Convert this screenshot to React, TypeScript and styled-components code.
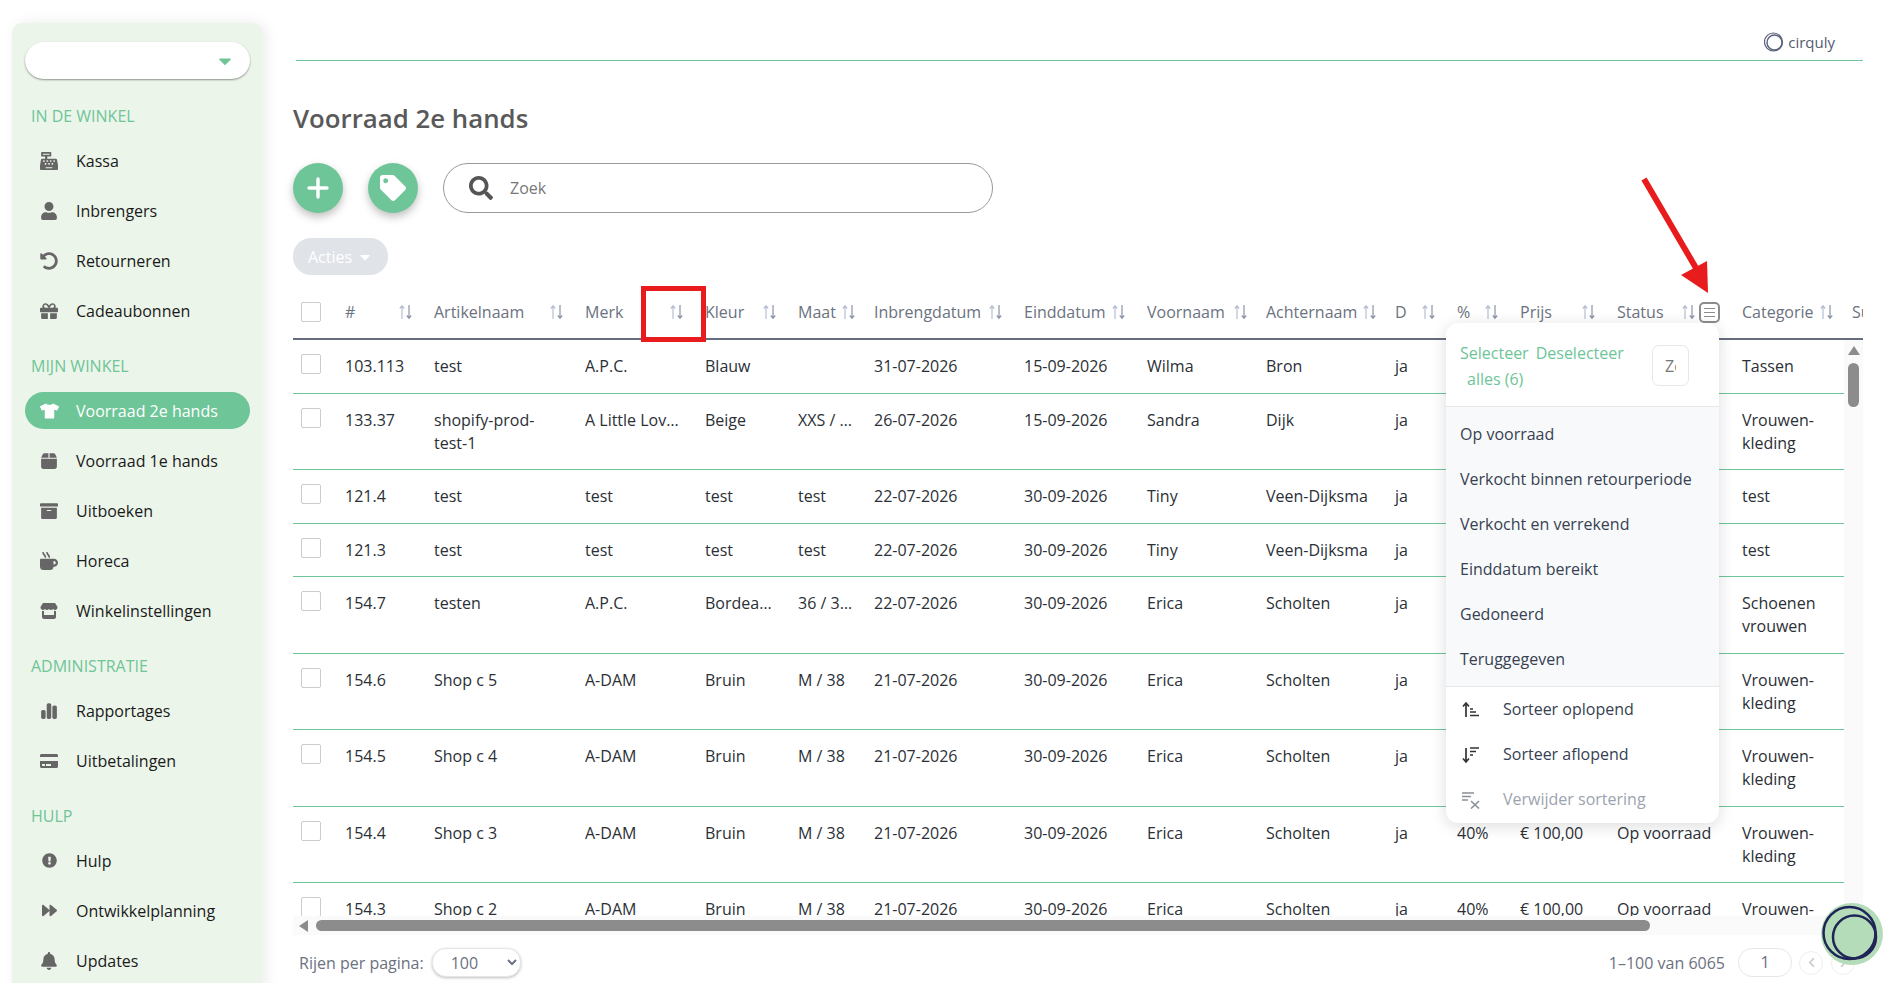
import React from 'react';
import styled, { createGlobalStyle } from 'styled-components';
import {
  FaArchive,
  FaBell,
  FaCaretDown,
  FaCashRegister,
  FaChevronLeft,
  FaChevronRight,
  FaCreditCard,
  FaExclamationCircle,
  FaForward,
  FaGift,
  FaMugHot,
  FaSearch,
  FaTag,
  FaTshirt,
  FaUndoAlt,
  FaUser,
} from 'react-icons/fa';
import { FaBox, FaChartSimple, FaStore } from 'react-icons/fa6';

const green = '#6ec597';
const columns = '52px 89px 151px 120px 93px 76px 150px 123px 119px 129px 62px 63px 97px 125px 110px 80px';

const GlobalStyle = createGlobalStyle`
  html, body {
    margin: 0;
    height: 100%;
    overflow: hidden;
    background: #fff;
    font-family: "Open Sans", "Liberation Sans", sans-serif;
    font-size: 16px;
  }
  * { box-sizing: border-box; }
`;

const Page = styled.div`
  display: flex;
  height: 100vh;
  overflow: hidden;
`;

const Sidebar = styled.aside`
  flex: 0 0 250px;
  height: 1000px;
  margin: 23px 0 0 12px;
  padding: 19px 12px 0 13px;
  background: #ecf5ea;
  border-radius: 10px;
  box-shadow: 4px 0 14px rgba(0, 0, 0, 0.08);
`;

const ShopSelect = styled.div`
  display: flex;
  align-items: center;
  justify-content: flex-end;
  height: 37px;
  margin-bottom: 26px;
  padding-right: 15px;
  background: #fff;
  border-radius: 19px;
  box-shadow: 0 1px 2px rgba(0, 0, 0, 0.4);
  color: ${green};
  font-size: 20px;
`;

const Section = styled.div`
  margin-bottom: 26px;
`;

const SectionTitle = styled.div`
  height: 22px;
  margin-bottom: 15px;
  padding-left: 6px;
  line-height: 22px;
  color: ${green};
  text-transform: uppercase;
`;

const NavItem = styled.div<{ $active?: boolean }>`
  display: flex;
  align-items: center;
  height: 37px;
  margin-bottom: 13px;
  padding-left: 15px;
  border-radius: 19px;
  background: ${(p) => (p.$active ? green : 'transparent')};
  color: ${(p) => (p.$active ? '#fff' : '#1a1a1a')};
`;

const NavIcon = styled.span<{ $active?: boolean }>`
  display: flex;
  align-items: center;
  flex: 0 0 36px;
  color: ${(p) => (p.$active ? '#fff' : '#666')};
  svg {
    width: auto;
    height: 18px;
  }
`;

const ShirtIcon = styled(FaTshirt)`
  && { width: 19px; height: 16px; }
`;

const SmallIcon = styled.span`
  display: flex;
  margin-left: 2px;
  svg { height: 15px; }
`;

const Main = styled.main`
  flex: 1;
  min-width: 0;
  padding: 0 22px 0 31px;
`;

const TopBar = styled.header`
  display: flex;
  align-items: flex-start;
  justify-content: flex-end;
  height: 61px;
  margin-left: 3px;
  padding: 31px 28px 0 0;
  border-bottom: 1px solid ${green};
`;

const Brand = styled.div`
  display: flex;
  align-items: center;
  gap: 4px;
  height: 22px;
  color: #555b6e;
  font-size: 15px;
`;

const Title = styled.h1`
  margin: 41px 0 28px;
  color: #595959;
  font-size: 25.8px;
  line-height: 33px;
  font-weight: 600;
`;

const Toolbar = styled.div`
  display: flex;
  gap: 25px;
  height: 50px;
`;

const RoundButton = styled.button`
  display: flex;
  align-items: center;
  justify-content: center;
  width: 50px;
  height: 50px;
  padding: 0;
  border: 0;
  border-radius: 50%;
  background: ${green};
  color: #fff;
  font-size: 26px;
  box-shadow: 0 4px 8px rgba(0, 0, 0, 0.25);
`;

const SearchBox = styled.label`
  display: flex;
  align-items: center;
  gap: 15px;
  width: 550px;
  padding: 0 20px 0 25px;
  border: 1px solid #999;
  border-radius: 25px;
  color: #555;
  font-size: 24px;
`;

const SearchInput = styled.input`
  flex: 1;
  min-width: 0;
  border: 0;
  outline: 0;
  background: transparent;
  font: inherit;
  font-size: 16px;
  &::placeholder { color: #777; opacity: 1; }
`;

const ActionsButton = styled.button`
  display: flex;
  align-items: center;
  gap: 5px;
  width: 95px;
  height: 37px;
  margin: 25px 0 11px;
  padding: 0 0 0 15px;
  border: 0;
  border-radius: 18px;
  background: #e0e4e9;
  color: #fff;
  font: inherit;
`;

const TableArea = styled.section`
  position: relative;
  width: 1570px;
`;

const HeaderRow = styled.div`
  display: grid;
  grid-template-columns: ${columns};
  align-items: center;
  height: 54px;
  border-bottom: 2px solid #666e7e;
  overflow: hidden;
  color: #6b7280;
`;

const HeaderCell = styled.div<{ $tight?: boolean }>`
  display: flex;
  align-items: center;
  justify-content: space-between;
  padding-right: ${(p) => (p.$tight ? 19 : 22)}px;
  white-space: nowrap;
`;

const SortGroup = styled.span`
  display: flex;
  align-items: center;
  gap: 4px;
`;

const MenuToggle = styled.span`
  display: flex;
  flex-direction: column;
  justify-content: center;
  gap: 3px;
  width: 21px;
  height: 21px;
  padding: 0 3px;
  border: 2px solid #8c8c8c;
  border-radius: 5px;
  i {
    display: block;
    height: 1px;
    background: #8c8c8c;
  }
`;

const Check = styled.span`
  display: block;
  width: 20px;
  height: 20px;
  margin-left: 8px;
  background: #fff;
  border: 1px solid #ccc;
  border-radius: 2px;
`;

const BodyWrap = styled.div`
  display: flex;
  height: 576px;
`;

const RowsClip = styled.div`
  width: 1551px;
  overflow: hidden;
`;

const Row = styled.div`
  display: grid;
  grid-template-columns: ${columns};
  padding: 15.25px 0 14.25px;
  border-bottom: 1px solid ${green};
  color: #2b2f36;
  line-height: 23px;
`;

const Cell = styled.div<{ $clip?: boolean; $pad?: number }>`
  padding-right: ${(p) => p.$pad ?? (p.$clip ? 22 : 10)}px;
  ${(p) => p.$clip && 'white-space: nowrap; overflow: hidden; text-overflow: ellipsis;'}
`;

const RowCheck = styled(Check)`
  margin-top: -1px;
`;

const VScroll = styled.div`
  position: relative;
  flex: 0 0 19px;
  background: #fafafa;
`;

const ScrollArrowUp = styled.span`
  position: absolute;
  top: 6px;
  left: 4px;
  border-left: 6px solid transparent;
  border-right: 6px solid transparent;
  border-bottom: 9px solid #8c8c8c;
`;

const VThumb = styled.span`
  position: absolute;
  top: 23px;
  left: 4px;
  width: 11px;
  height: 44px;
  border-radius: 6px;
  background: #8c8c8c;
`;

const HScroll = styled.div`
  display: flex;
  align-items: center;
  width: 1551px;
  height: 19px;
  padding-left: 6px;
  background: #fafafa;
`;

const ScrollArrowLeft = styled.span`
  margin-right: 8px;
  border-top: 6px solid transparent;
  border-bottom: 6px solid transparent;
  border-right: 9px solid #8c8c8c;
`;

const HThumb = styled.span`
  width: 1334px;
  height: 11px;
  border-radius: 6px;
  background: #8c8c8c;
`;

const Footer = styled.footer`
  display: flex;
  align-items: center;
  justify-content: space-between;
  height: 29px;
  margin-top: 13px;
  padding-left: 6px;
  color: #6b7280;
`;

const FooterGroup = styled.div`
  display: flex;
  align-items: center;
`;

const PerPage = styled.select`
  width: 89px;
  height: 29px;
  margin-left: 8px;
  padding-left: 14px;
  border: 1px solid #e5e7eb;
  border-radius: 14px;
  background: #fff;
  color: #6b7280;
  font: inherit;
  box-shadow: 0 1px 3px rgba(0, 0, 0, 0.25);
`;

const PageNumber = styled.div`
  width: 54px;
  height: 29px;
  margin: 0 7px 0 13px;
  border: 1px solid #e5e7eb;
  border-radius: 14px;
  line-height: 27px;
  text-align: center;
`;

const PageButton = styled.span`
  display: flex;
  align-items: center;
  justify-content: center;
  width: 24px;
  height: 24px;
  margin-right: 8px;
  border: 1px solid #eee;
  border-radius: 50%;
  color: #ccc;
  font-size: 11px;
`;

const Popup = styled.div`
  position: absolute;
  top: 37px;
  left: 1153px;
  width: 273px;
  height: 500px;
  background: #fff;
  border-radius: 12px;
  box-shadow: 0 3px 16px rgba(0, 0, 0, 0.14);
  overflow: hidden;
  line-height: 25px;
`;

const PopupTop = styled.div`
  display: flex;
  justify-content: space-between;
  height: 84px;
  padding: 17px 30px 0 14px;
  border-bottom: 1px solid #e5e7eb;
`;

const SelectLinks = styled.div`
  color: ${green};
  line-height: 26px;
  span { display: inline-block; margin-right: 7px; }
  span:last-child { display: block; margin-left: 7px; }
`;

const PopupSearch = styled.input`
  flex: 0 0 37px;
  width: 37px;
  height: 41px;
  margin-top: 5px;
  padding: 0 12px;
  border: 1px solid #e5e7eb;
  border-radius: 7px;
  outline: 0;
  font: inherit;
  &::placeholder { color: #777; opacity: 1; }
`;

const StatusList = styled.div`
  height: 280px;
  padding-top: 5px;
  background: #f8f9fb;
  border-bottom: 1px solid #e5e7eb;
`;

const StatusItem = styled.div`
  height: 45px;
  padding-left: 14px;
  line-height: 45px;
  color: #374151;
`;

const SortItem = styled.div<{ $muted?: boolean }>`
  display: flex;
  align-items: center;
  gap: 23px;
  height: 45px;
  padding-left: 16px;
  color: ${(p) => (p.$muted ? '#9ca3af' : '#374151')};
`;

const RedBox = styled.div`
  position: absolute;
  top: 0;
  left: 348px;
  width: 65px;
  height: 56px;
  border: 5px solid #e81c1c;
`;

const RedArrow = styled.svg`
  position: absolute;
  top: -111px;
  left: 1347px;
`;

const Bubble = styled.svg`
  position: fixed;
  right: 1px;
  bottom: 17px;
`;

const PlusIcon = () => (
  <svg width="24" height="24" viewBox="0 0 24 24" fill="none" stroke="#fff" strokeWidth="3.4" strokeLinecap="round">
    <path d="M12 3v18M3 12h18" />
  </svg>
);

const SortIcon = () => (
  <svg width="13" height="16" viewBox="0 0 13 16" fill="none" strokeWidth="1.2">
    <path d="M3 15V2M.8 4.5 3 1.8l2.2 2.7" stroke="#b5bfd3" />
    <path d="M10 1v13M7.8 11.5 10 14.2l2.2-2.7" stroke="#8b95a7" />
  </svg>
);

const AscIcon = () => (
  <svg width="18" height="18" viewBox="0 0 18 18" fill="none" stroke="#333" strokeWidth="1.7">
    <path d="M4 16V2M1 5.5 4 2l3 3.5M8 8h3M8 11h6M8 14.5h9" />
  </svg>
);

const DescIcon = () => (
  <svg width="18" height="18" viewBox="0 0 18 18" fill="none" stroke="#333" strokeWidth="1.7">
    <path d="M4 2v14M1 12.5 4 16l3-3.5M8 2h9M8 5.5h6M8 9h3" />
  </svg>
);

const ClearIcon = () => (
  <svg width="18" height="18" viewBox="0 0 18 18" fill="none" stroke="#8b8f97" strokeWidth="1.6">
    <path d="M0 2h12M0 5.5h9M0 9h6M9 10l8 7.5M17 10l-8 7.5" />
  </svg>
);

const nav = [
  {
    title: 'In de winkel',
    items: [
      { label: 'Kassa', icon: <FaCashRegister /> },
      { label: 'Inbrengers', icon: <FaUser /> },
      { label: 'Retourneren', icon: <FaUndoAlt /> },
      { label: 'Cadeaubonnen', icon: <FaGift /> },
    ],
  },
  {
    title: 'Mijn winkel',
    items: [
      { label: 'Voorraad 2e hands', icon: <ShirtIcon />, active: true },
      { label: 'Voorraad 1e hands', icon: <FaBox /> },
      { label: 'Uitboeken', icon: <FaArchive /> },
      { label: 'Horeca', icon: <FaMugHot /> },
      { label: 'Winkelinstellingen', icon: <FaStore /> },
    ],
  },
  {
    title: 'Administratie',
    items: [
      { label: 'Rapportages', icon: <FaChartSimple /> },
      { label: 'Uitbetalingen', icon: <FaCreditCard /> },
    ],
  },
  {
    title: 'Hulp',
    items: [
      { label: 'Hulp', icon: <SmallIcon><FaExclamationCircle /></SmallIcon> },
      { label: 'Ontwikkelplanning', icon: <SmallIcon><FaForward /></SmallIcon> },
      { label: 'Updates', icon: <FaBell /> },
    ],
  },
];

const headers: { label: string; tight?: boolean }[] = [
  { label: '#' },
  { label: 'Artikelnaam' },
  { label: 'Merk' },
  { label: 'Kleur' },
  { label: 'Maat', tight: true },
  { label: 'Inbrengdatum' },
  { label: 'Einddatum' },
  { label: 'Voornaam', tight: true },
  { label: 'Achternaam', tight: true },
  { label: 'D' },
  { label: '%' },
  { label: 'Prijs' },
  { label: 'Status' },
  { label: 'Categorie', tight: true },
];

const rows = [
  ['103.113', 'test', 'A.P.C.', 'Blauw', '', '31-07-2026', '15-09-2026', 'Wilma', 'Bron', 'Tassen'],
  ['133.37', 'shopify-prod-test-1', 'A Little Lovely Company', 'Beige', 'XXS / 32', '26-07-2026', '15-09-2026', 'Sandra', 'Dijk', 'Vrouwen-kleding'],
  ['121.4', 'test', 'test', 'test', 'test', '22-07-2026', '30-09-2026', 'Tiny', 'Veen-Dijksma', 'test'],
  ['121.3', 'test', 'test', 'test', 'test', '22-07-2026', '30-09-2026', 'Tiny', 'Veen-Dijksma', 'test'],
  ['154.7', 'testen', 'A.P.C.', 'Bordeaux', '36 / 38 / 40', '22-07-2026', '30-09-2026', 'Erica', 'Scholten', 'Schoenen vrouwen'],
  ['154.6', 'Shop c 5', 'A-DAM', 'Bruin', 'M / 38', '21-07-2026', '30-09-2026', 'Erica', 'Scholten', 'Vrouwen-kleding'],
  ['154.5', 'Shop c 4', 'A-DAM', 'Bruin', 'M / 38', '21-07-2026', '30-09-2026', 'Erica', 'Scholten', 'Vrouwen-kleding'],
  ['154.4', 'Shop c 3', 'A-DAM', 'Bruin', 'M / 38', '21-07-2026', '30-09-2026', 'Erica', 'Scholten', 'Vrouwen-kleding'],
  ['154.3', 'Shop c 2', 'A-DAM', 'Bruin', 'M / 38', '21-07-2026', '30-09-2026', 'Erica', 'Scholten', 'Vrouwen-kleding'],
];

const statuses = [
  'Op voorraad',
  'Verkocht binnen retourperiode',
  'Verkocht en verrekend',
  'Einddatum bereikt',
  'Gedoneerd',
  'Teruggegeven',
];

const App: React.FC = () => {
  return (
    <Page>
      <GlobalStyle />
      <Sidebar>
        <ShopSelect>
          <FaCaretDown />
        </ShopSelect>
        {nav.map((section) => (
          <Section key={section.title}>
            <SectionTitle>{section.title}</SectionTitle>
            {section.items.map((item) => (
              <NavItem key={item.label} $active={item.active}>
                <NavIcon $active={item.active}>{item.icon}</NavIcon>
                {item.label}
              </NavItem>
            ))}
          </Section>
        ))}
      </Sidebar>
      <Main>
        <TopBar>
          <Brand>
            <svg width="20" height="20" viewBox="0 0 20 20" fill="none" stroke="#59607a">
              <circle cx="9.5" cy="10" r="9" strokeWidth="1.2" />
              <circle cx="10.5" cy="10.5" r="7.5" strokeWidth="1.4" />
            </svg>
            cirquly
          </Brand>
        </TopBar>
        <Title>Voorraad 2e hands</Title>
        <Toolbar>
          <RoundButton>
            <PlusIcon />
          </RoundButton>
          <RoundButton>
            <FaTag />
          </RoundButton>
          <SearchBox>
            <FaSearch />
            <SearchInput placeholder="Zoek" />
          </SearchBox>
        </Toolbar>
        <ActionsButton>
          Acties
          <FaCaretDown />
        </ActionsButton>
        <TableArea>
          <HeaderRow>
            <Check />
            {headers.map((h) => (
              <HeaderCell key={h.label} $tight={h.tight}>
                {h.label}
                <SortGroup>
                  <SortIcon />
                  {h.label === 'Status' && (
                    <MenuToggle>
                      <i />
                      <i />
                      <i />
                    </MenuToggle>
                  )}
                </SortGroup>
              </HeaderCell>
            ))}
            <HeaderCell>Subcategorie</HeaderCell>
          </HeaderRow>
          <BodyWrap>
            <RowsClip>
              {rows.map((r) => (
                <Row key={r[0]}>
                  <RowCheck />
                  <Cell>{r[0]}</Cell>
                  <Cell $pad={25}>{r[1]}</Cell>
                  <Cell $clip>{r[2]}</Cell>
                  <Cell $clip $pad={24}>{r[3]}</Cell>
                  <Cell $clip $pad={20}>{r[4]}</Cell>
                  <Cell>{r[5]}</Cell>
                  <Cell>{r[6]}</Cell>
                  <Cell>{r[7]}</Cell>
                  <Cell>{r[8]}</Cell>
                  <Cell>ja</Cell>
                  <Cell>40%</Cell>
                  <Cell>€ 100,00</Cell>
                  <Cell>Op voorraad</Cell>
                  <Cell>{r[9]}</Cell>
                </Row>
              ))}
            </RowsClip>
            <VScroll>
              <ScrollArrowUp />
              <VThumb />
            </VScroll>
          </BodyWrap>
          <HScroll>
            <ScrollArrowLeft />
            <HThumb />
          </HScroll>
          <Popup>
            <PopupTop>
              <SelectLinks>
                <span>Selecteer</span>
                <span>Deselecteer</span>
                <span>alles (6)</span>
              </SelectLinks>
              <PopupSearch placeholder="Zoek" />
            </PopupTop>
            <StatusList>
              {statuses.map((s) => (
                <StatusItem key={s}>{s}</StatusItem>
              ))}
            </StatusList>
            <SortItem>
              <AscIcon />
              Sorteer oplopend
            </SortItem>
            <SortItem>
              <DescIcon />
              Sorteer aflopend
            </SortItem>
            <SortItem $muted>
              <ClearIcon />
              Verwijder sortering
            </SortItem>
          </Popup>
          <RedBox />
          <RedArrow width="72" height="122" viewBox="0 0 72 122">
            <path d="M4 4 56 93" stroke="#e81c1c" strokeWidth="6" />
            <path d="M67 86 41 100 68 118Z" fill="#e81c1c" />
          </RedArrow>
        </TableArea>
        <Footer>
          <FooterGroup>
            Rijen per pagina:
            <PerPage defaultValue="100">
              <option value="100">100</option>
            </PerPage>
          </FooterGroup>
          <FooterGroup>
            1–100 van 6065
            <PageNumber>1</PageNumber>
            <PageButton>
              <FaChevronLeft />
            </PageButton>
            <PageButton>
              <FaChevronRight />
            </PageButton>
          </FooterGroup>
        </Footer>
      </Main>
      <Bubble width="64" height="64" viewBox="0 0 64 64" fill="none">
        <circle cx="32" cy="32" r="31" fill="#b5dcb8" />
        <circle cx="29.5" cy="31" r="26" stroke="#1f2557" strokeWidth="2.5" />
        <circle cx="34.5" cy="35" r="21.5" stroke="#1f2557" strokeWidth="2.5" />
      </Bubble>
    </Page>
  );
};

export default App;
